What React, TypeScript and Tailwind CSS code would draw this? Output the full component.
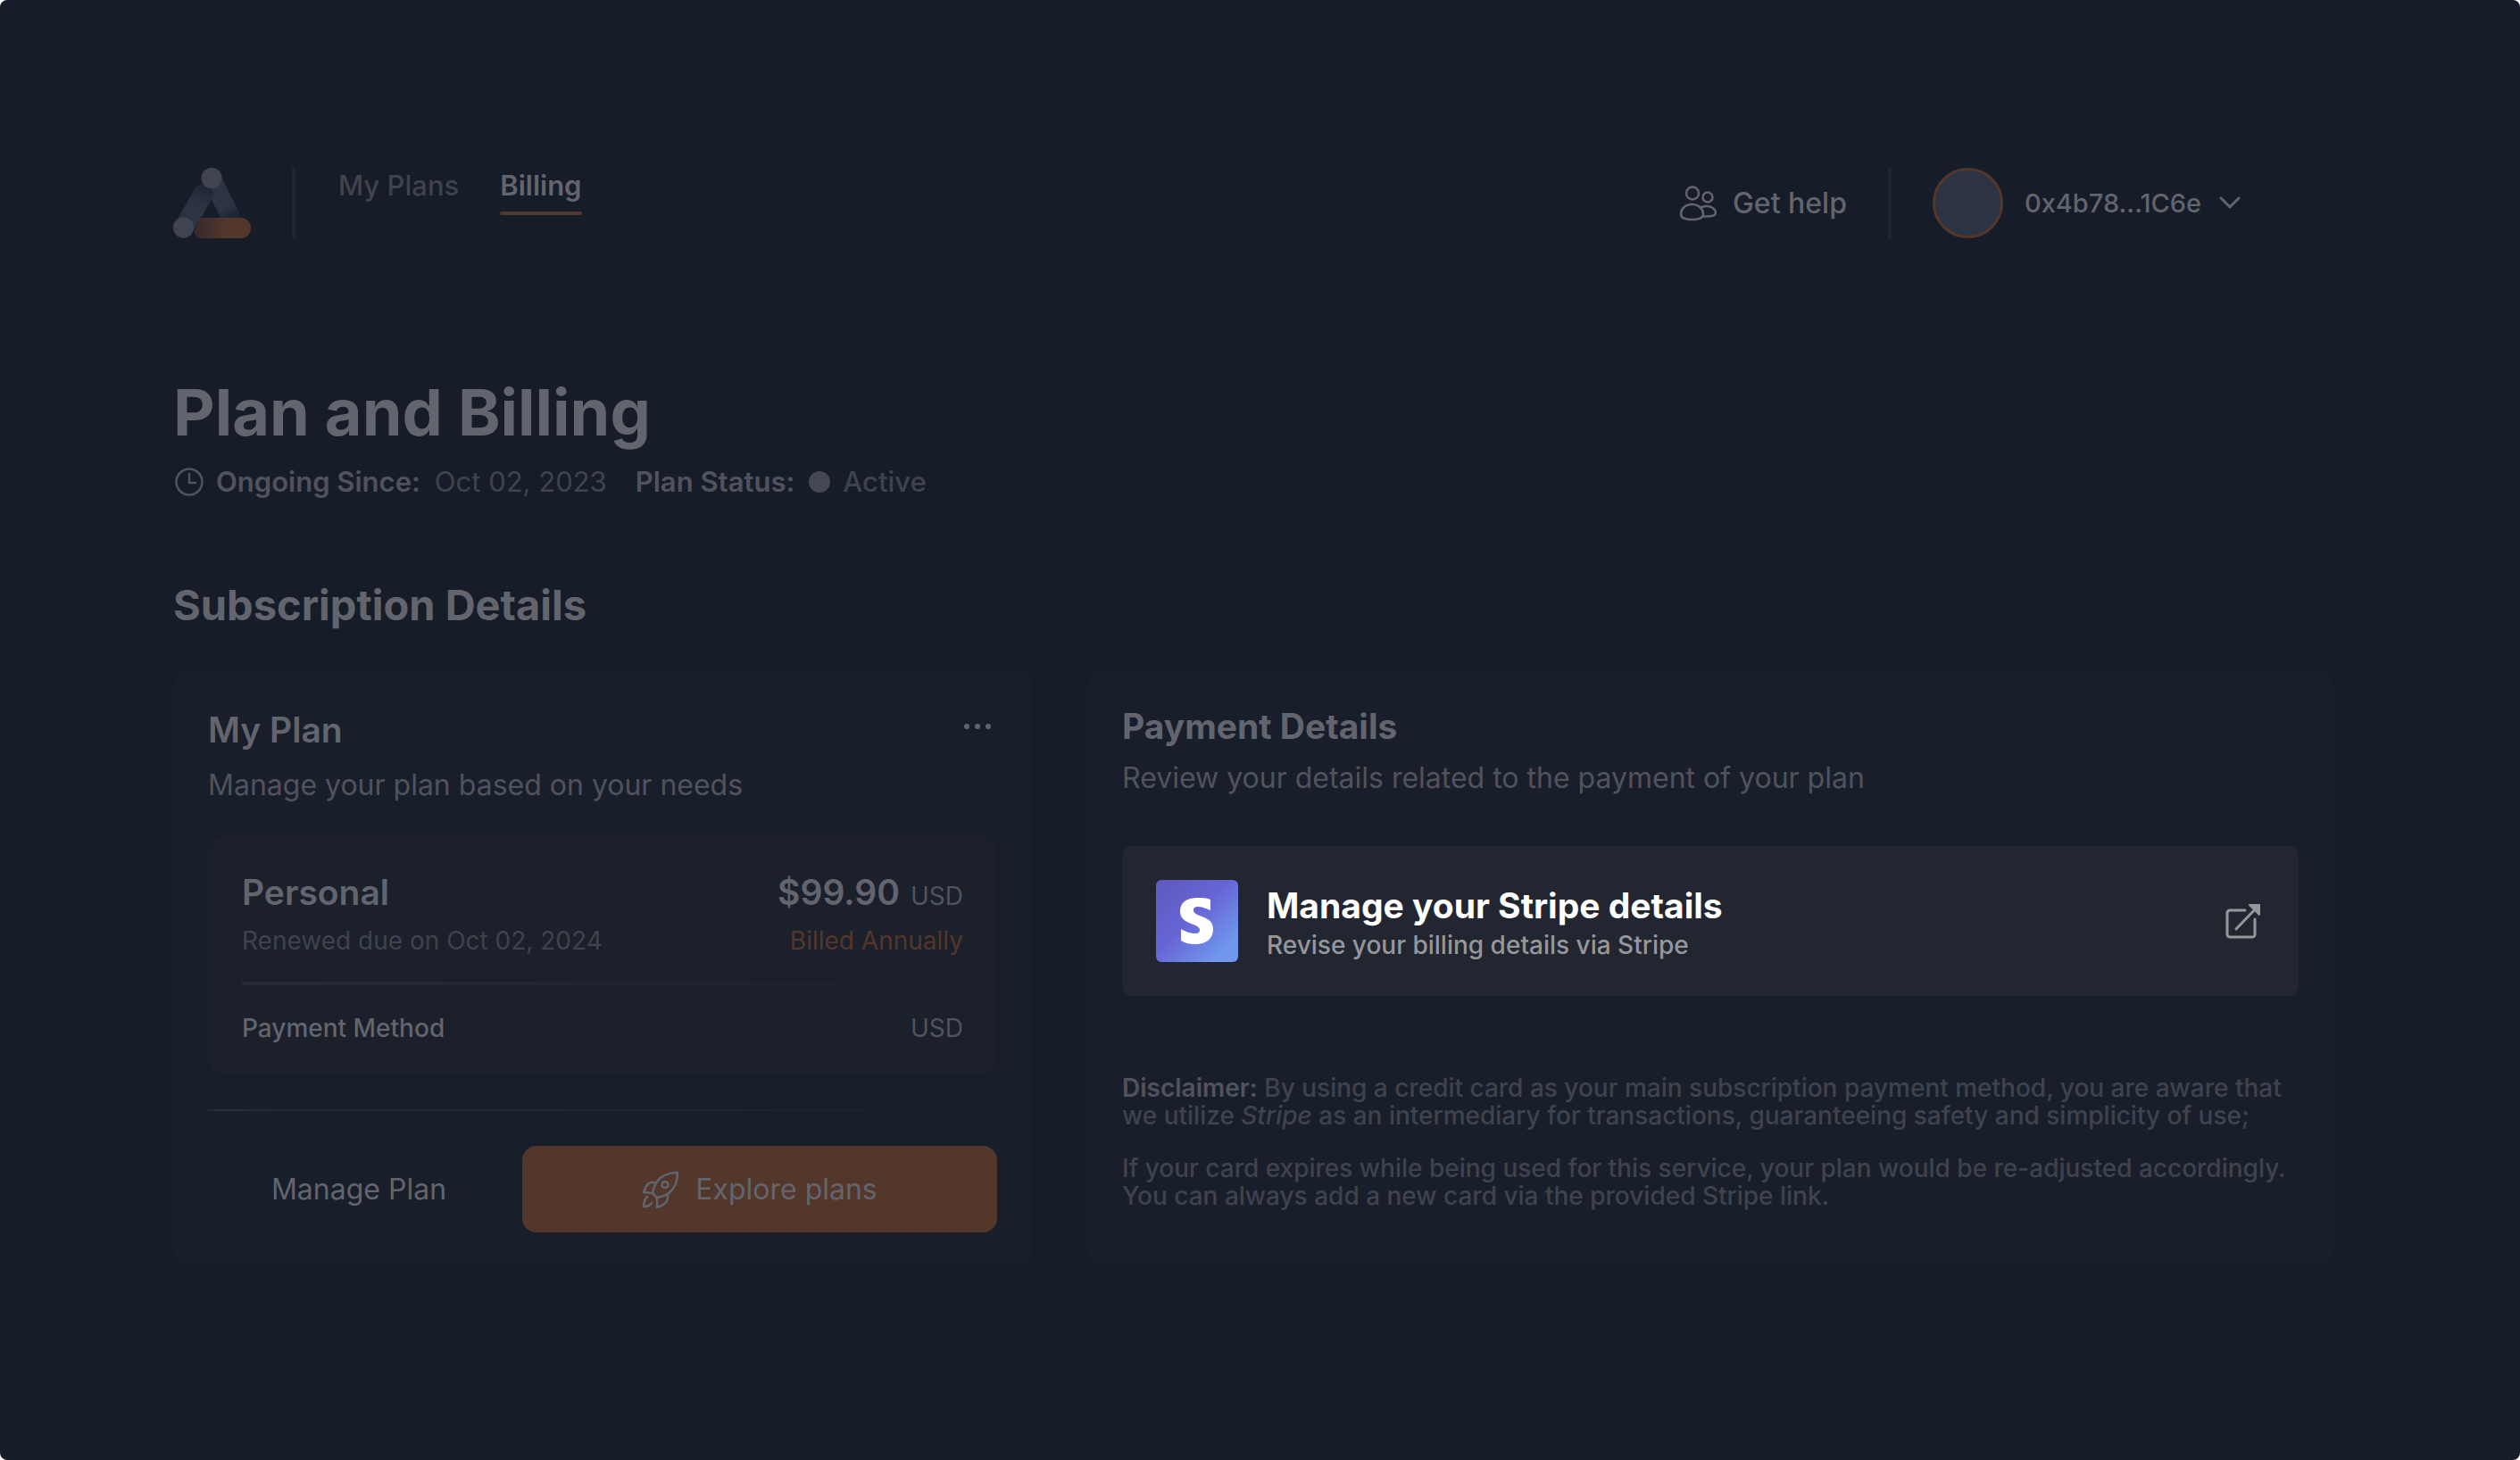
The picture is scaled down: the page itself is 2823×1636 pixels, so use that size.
import type { ReactNode } from "react";

function Logo() {
  return (
    <svg viewBox="0 0 87 79" className="h-[79px] w-[87px]" fill="none" strokeLinecap="round" aria-hidden="true">
      <defs>
        <linearGradient id="logo-right" gradientUnits="userSpaceOnUse" x1="43" y1="12" x2="64" y2="56">
          <stop offset="0.75" stopColor="#2c3343" />
          <stop offset="1" stopColor="#1d2431" />
        </linearGradient>
        <linearGradient id="logo-left" gradientUnits="userSpaceOnUse" x1="34" y1="22" x2="12" y2="67">
          <stop offset="0" stopColor="#202735" />
          <stop offset="0.4" stopColor="#2c3343" />
        </linearGradient>
        <linearGradient id="logo-base" gradientUnits="userSpaceOnUse" x1="22" y1="0" x2="64" y2="0">
          <stop offset="0" stopColor="#35292a" />
          <stop offset="0.9" stopColor="#54372b" />
        </linearGradient>
      </defs>
      <path d="M43 12 64 54" stroke="url(#logo-right)" strokeWidth="21" />
      <path d="M34 29 12 67" stroke="url(#logo-left)" strokeWidth="22" />
      <path d="M31 56H75.500a11.500 11.500 0 0 1 0 23H29q-6-3-5-9Z" fill="url(#logo-base)" />
      <circle cx="43" cy="11.500" r="11.500" fill="#3f4450" />
      <circle cx="11.500" cy="67" r="11.500" fill="#3f4450" />
    </svg>
  );
}

function PeopleIcon() {
  return (
    <svg viewBox="0 0 42 40" className="h-10 w-[42px]" fill="none" stroke="currentColor" strokeWidth="2.500" strokeLinejoin="round" strokeLinecap="round" aria-hidden="true">
      <circle cx="15" cy="8.500" r="7" />
      <circle cx="32" cy="13" r="5.500" />
      <path d="M14.500 21C7 21 2 26 2 32c0 4 4 6 12.500 6S27 36 27 32c0-6-5-11-12.500-11Z" />
      <path d="M24 25c2-2 4-2 7-2 6 0 10 4 10 7.500 0 3-4 4-10 4h-4" />
    </svg>
  );
}

function ChevronIcon() {
  return (
    <svg viewBox="0 0 24 15" className="h-[15px] w-6" fill="none" stroke="currentColor" strokeWidth="3" strokeLinecap="round" strokeLinejoin="round" aria-hidden="true">
      <path d="m2 2 10 10L22 2" />
    </svg>
  );
}

function ClockIcon() {
  return (
    <svg viewBox="0 0 32 32" className="size-8" fill="none" stroke="currentColor" strokeWidth="2.500" strokeLinecap="round" strokeLinejoin="round" aria-hidden="true">
      <circle cx="16" cy="16" r="14.500" />
      <path d="M16 7v10h7" />
    </svg>
  );
}

function RocketIcon() {
  return (
    <svg viewBox="0 0 42 42" className="size-[42px]" fill="none" stroke="currentColor" strokeWidth="2.500" strokeLinecap="round" strokeLinejoin="round" aria-hidden="true">
      <path d="M40 2C29 2 22 5 17 12c-3 4-4 8-5 13l5 5c5-1 9-2 13-5 7-5 10-12 10-23Z" />
      <circle cx="26" cy="15.500" r="3.500" />
      <path d="M16 13h-5c-3 0-4 1-6 4L2 24l10 1" />
      <path d="M29 26v4c0 4-2 6-5 8l-7 3V30" />
      <path d="M6 29c-3 3-4 7-4 11 4 0 7-1 9-4" />
    </svg>
  );
}

function ExternalIcon() {
  return (
    <svg viewBox="0 0 40 40" className="size-10" fill="none" stroke="currentColor" strokeWidth="3" strokeLinecap="round" strokeLinejoin="round" aria-hidden="true">
      <path d="M22 8H5a3 3 0 0 0-3 3v24a3 3 0 0 0 3 3h25a3 3 0 0 0 3-3V18" />
      <path d="M12 29 37 3" />
      <path d="M27 2h11v11Z" fill="currentColor" strokeWidth="2" />
    </svg>
  );
}

function StripeLogo() {
  return (
    <svg viewBox="0 0 92 92" className="size-[92px] shrink-0 rounded-md" aria-hidden="true">
      <defs>
        <linearGradient id="stripe-tile" x1="0" y1="0" x2="1" y2="1">
          <stop offset="0" stopColor="#5f59bd" />
          <stop offset="0.45" stopColor="#6765d6" />
          <stop offset="0.85" stopColor="#7098ec" />
        </linearGradient>
      </defs>
      <rect width="92" height="92" fill="url(#stripe-tile)" />
      <path
        fill="#fff"
        d="M61 22v12c-5-2-10-4-14-4-3 0-5 1-5 4 0 8 22 5 22 21 0 11-8 17-20 17-6 0-11-1-16-4V55c5 3 11 5 16 5 3 0 5-1 5-4 0-8-22-5-22-21 0-10 8-15 19-15 5 0 10 0 15 2Z"
      />
    </svg>
  );
}

function Card({ children, label }: { children: ReactNode; label: string }) {
  return (
    <section aria-label={label} className="flex flex-col rounded-2xl bg-[#191f2a] px-[39px] pb-9">
      {children}
    </section>
  );
}

export default function App() {
  return (
    <div className="min-h-screen rounded-lg bg-[#171d28] pr-[209px] pb-16 pl-[194px] font-[family-name:Inter,sans-serif] text-[32px] leading-10 text-[#62656e]">
      <header className="flex items-center justify-between pt-[188px] pr-[104px]">
        <div className="flex h-[79px]">
          <a href="#home" aria-label="Home">
            <Logo />
          </a>
          <div className="ml-[46px] w-1 bg-[#222530]" />
          <nav className="ml-12 flex items-start gap-[46px] text-[31px]">
            <a href="#plans" className="font-medium text-[#3f434e]">My Plans</a>
            <a href="#billing" className="flex flex-col gap-[9px] font-semibold">
              Billing
              <span className="h-1 rounded-full bg-[#54372b]" />
            </a>
          </nav>
        </div>
        <div className="flex items-center font-medium">
          <button type="button" className="flex items-center gap-[18px]">
            <PeopleIcon />
            Get help
          </button>
          <div className="ml-[46px] h-[79px] w-1 bg-[#222530]" />
          <button type="button" className="ml-[46px] flex items-center gap-6 text-[29px]">
            <span className="size-[79px] rounded-full border-[3px] border-[#54372b] bg-[#2c3343]" />
            <span className="flex items-center gap-5">
              0x4b78...1C6e
              <ChevronIcon />
            </span>
          </button>
        </div>
      </header>

      <main>
        <h1 className="mt-[153px] text-[72px] leading-[84px] font-bold">Plan and Billing</h1>
        <div className="mt-4 flex items-center gap-8 text-[31px]">
          <p className="flex items-center gap-4">
            <span className="flex items-center gap-[14px] pl-0.5 font-semibold text-[#50535d]">
              <ClockIcon />
              Ongoing Since:
            </span>
            <span className="text-[#3f434e]">Oct 02, 2023</span>
          </p>
          <p className="flex items-center gap-4">
            <span className="font-semibold text-[#50535d]">Plan Status:</span>
            <span className="flex items-center gap-[14px] font-medium text-[#3f434e]">
              <span className="size-6 rounded-full bg-[#444853]" />
              Active
            </span>
          </p>
        </div>
        <h2 className="mt-[90px] text-[47px] leading-[56px] font-bold">Subscription Details</h2>

        <div className="mt-[46px] grid grid-cols-[962fr_1396fr] gap-[62px]">
          <Card label="My Plan">
            <div className="flex items-start justify-between pt-10">
              <h3 className="text-[39px] leading-[52px] font-semibold">My Plan</h3>
              <button type="button" aria-label="More options" className="mt-[19px] mr-[7px] flex gap-[6px]">
                <span className="size-[6px] rounded-full bg-[#62656e]" />
                <span className="size-[6px] rounded-full bg-[#62656e]" />
                <span className="size-[6px] rounded-full bg-[#62656e]" />
              </button>
            </div>
            <p className="mt-4 text-[#50535d]">Manage your plan based on your needs</p>

            <div className="mt-[38px] rounded-2xl bg-[#1b202b] px-[38px] pt-9 pb-8 text-[28px]">
              <div className="flex items-baseline justify-between">
                <h4 className="text-[39px] leading-[52px] font-semibold">Personal</h4>
                <p className="flex items-baseline gap-3 text-[#50535d]">
                  <span className="text-[39px] leading-[52px] font-semibold text-[#62656e]">$99.90</span>
                  USD
                </p>
              </div>
              <div className="mt-2 flex justify-between">
                <p className="text-[#3f434e]">Renewed due on Oct 02, 2024</p>
                <p className="text-[#54372b]">Billed Annually</p>
              </div>
              <div className="mt-[26px] h-1 bg-linear-to-r from-[#272a34] to-[#1b202b]" />
              <div className="mt-7 flex justify-between">
                <p className="font-medium">Payment Method</p>
                <p className="text-[#50535d]">USD</p>
              </div>
            </div>

            <div className="mt-[39px] h-0.5 bg-linear-to-r from-[#2a2d37] to-[#191f2a]" />

            <div className="mt-[39px] grid grid-cols-[338fr_532fr] gap-[14px]">
              <button type="button">Manage Plan</button>
              <button type="button" className="flex h-[97px] items-center justify-center gap-[18px] rounded-2xl bg-[#54372b]">
                <RocketIcon />
                Explore plans
              </button>
            </div>
          </Card>

          <Card label="Payment Details">
            <h3 className="mt-9 text-[39px] leading-[52px] font-bold">Payment Details</h3>
            <p className="mt-3 text-[#50535d]">Review your details related to the payment of your plan</p>

            <a href="#stripe" className="mt-14 flex items-center gap-8 rounded-xl bg-[#222630] p-[38px] pr-[42px]">
              <StripeLogo />
              <span className="flex grow flex-col pt-1">
                <span className="text-[39px] leading-[50px] font-bold text-white">Manage your Stripe details</span>
                <span className="text-[28px] leading-[38px] font-medium text-[#96979b]">Revise your billing details via Stripe</span>
              </span>
              <span className="text-[#96979b]">
                <ExternalIcon />
              </span>
            </a>

            <div className="mt-[88px] flex flex-col gap-7 text-[28px] leading-[31px] font-medium text-[#3f434e]">
              <p>
                <strong className="font-semibold text-[#50535d]">Disclaimer:</strong> By using a credit card as your main subscription payment method, you are aware that we utilize <em>Stripe</em> as an intermediary for transactions, guaranteeing safety and simplicity of use;
              </p>
              <p>
                If your card expires while being used for this service, your plan would be re-adjusted accordingly. You can always add a new card via the provided Stripe link.
              </p>
            </div>
          </Card>
        </div>
      </main>
    </div>
  );
}
